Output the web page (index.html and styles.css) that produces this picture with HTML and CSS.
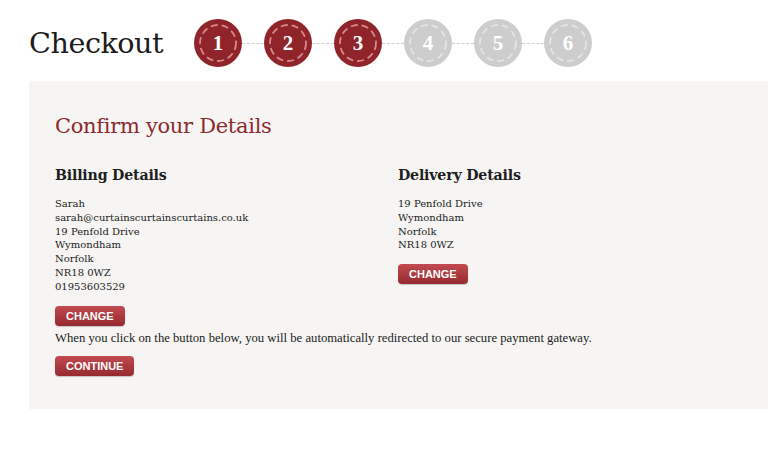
FILE: index.html
```html
<!DOCTYPE html>
<html>
<head>
<meta charset="utf-8">
<link rel="stylesheet" href="styles.css">
</head>
<body>
<div class="page">
  <header class="top">
    <h1 class="title">Checkout</h1>
    <ol class="steps">
      <li class="step done"><svg viewBox="0 0 48 48"><circle cx="24" cy="24" r="18"/></svg><span>1</span></li>
      <li class="line"></li>
      <li class="step done"><svg viewBox="0 0 48 48"><circle cx="24" cy="24" r="18"/></svg><span>2</span></li>
      <li class="line"></li>
      <li class="step done"><svg viewBox="0 0 48 48"><circle cx="24" cy="24" r="18"/></svg><span>3</span></li>
      <li class="line"></li>
      <li class="step"><svg viewBox="0 0 48 48"><circle cx="24" cy="24" r="18"/></svg><span>4</span></li>
      <li class="line"></li>
      <li class="step"><svg viewBox="0 0 48 48"><circle cx="24" cy="24" r="18"/></svg><span>5</span></li>
      <li class="line"></li>
      <li class="step"><svg viewBox="0 0 48 48"><circle cx="24" cy="24" r="18"/></svg><span>6</span></li>
    </ol>
  </header>
  <section class="panel">
    <h2 class="confirm">Confirm your Details</h2>
    <div class="cols">
      <div class="col">
        <h3 class="sub">Billing Details</h3>
        <p class="addr">Sarah<br>sarah@curtainscurtainscurtains.co.uk<br>19 Penfold Drive<br>Wymondham<br>Norfolk<br>NR18 0WZ<br>01953603529</p>
        <button class="btn">CHANGE</button>
      </div>
      <div class="col">
        <h3 class="sub">Delivery Details</h3>
        <p class="addr">19 Penfold Drive<br>Wymondham<br>Norfolk<br>NR18 0WZ</p>
        <button class="btn">CHANGE</button>
      </div>
    </div>
    <p class="note">When you click on the button below, you will be automatically redirected to our secure payment gateway.</p>
    <button class="btn">CONTINUE</button>
  </section>
</div>
</body>
</html>
```
FILE: styles.css
```css
html, body { margin: 0; padding: 0; background: #fff; }
body { font-family: "DejaVu Serif", serif; color: #222; }
.page { padding: 17px 10px 0 29px; }
.top { display: flex; align-items: center; height: 52px; }
.title { margin: 0; font-weight: normal; font-size: 28.7px; letter-spacing: -0.5px; color: #1c1c1c; width: 165px; }
.steps { list-style: none; margin: 0; padding: 0; display: flex; align-items: center; }
.step { position: relative; width: 48px; height: 48px; border-radius: 50%; background: #cdcdcd; display: flex; align-items: center; justify-content: center; }
.step svg { position: absolute; left: 0; top: 0; width: 48px; height: 48px; }
.step circle { fill: none; stroke: #e4e4e4; stroke-width: 1.8; stroke-dasharray: 7 4; }
.step.done circle { stroke: #d9898e; }
.step span { position: relative; color: #fff; font-weight: bold; font-size: 21px; font-family: "Liberation Serif", serif; }
.step.done { background: #8f242a; }
.line { width: 22px; border-top: 1px dashed #cfcfcf; }
.panel { margin-top: 12px; background: #f6f5f3; padding: 33px 26px 33px; }
.confirm { margin: 0; font-weight: normal; font-size: 21px; color: #8b2a2f; letter-spacing: -0.3px; }
.cols { display: flex; margin-top: 29px; }
.col { width: 343px; }
.sub { margin: 0 0 14px; font-size: 14.2px; font-weight: bold; color: #1e1e1e; letter-spacing: -0.2px; }
.addr { margin: 0 0 12px; font-size: 10px; line-height: 13.8px; color: #222; }
.btn { display: block; border: none; border-radius: 4px; background: linear-gradient(#c14a50, #962a30); color: #fff; font-family: "Liberation Sans", Arial, sans-serif; font-weight: bold; font-size: 11px; height: 20px; padding: 0 11px; box-shadow: 0 1px 1px rgba(0,0,0,0.2); }
.note { margin: 6px 0 11px; font-family: "Liberation Serif", serif; font-size: 12.7px; line-height: 13px; color: #222; }
```
